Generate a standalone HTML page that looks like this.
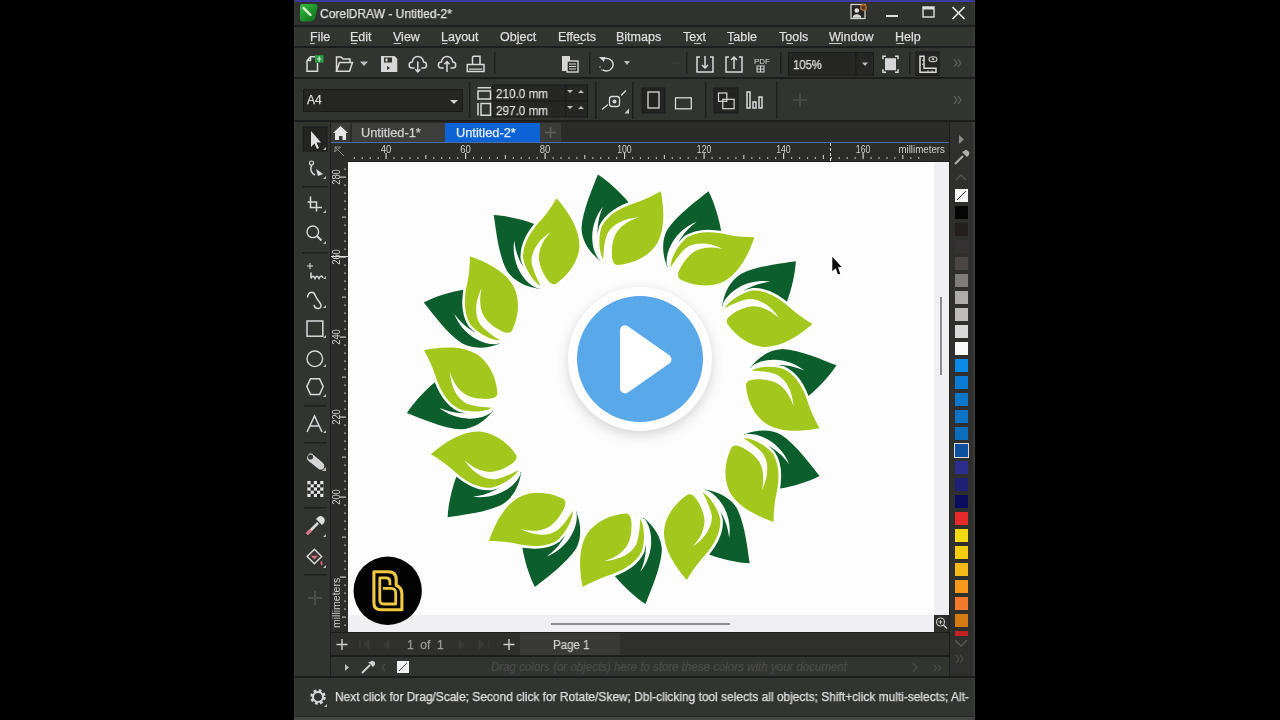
<!DOCTYPE html>
<html><head><meta charset="utf-8">
<style>
*{margin:0;padding:0;box-sizing:border-box}
html,body{width:1280px;height:720px;overflow:hidden;background:#000}
body{position:relative;font-family:"Liberation Sans",sans-serif;color:#d6d6d6}
.a{position:absolute}
.t{position:absolute;white-space:nowrap;font-size:12.5px;color:#dedede;line-height:14px;will-change:transform;-webkit-text-stroke:0.25px currentColor}
.ln{position:absolute;background:#1d1d1d}
svg{position:absolute;overflow:visible}
.sw{position:absolute;left:955px;width:13px;height:13px}
.ic{fill:none;stroke:#d9d9d9;stroke-width:1.5}
.icf{fill:#d9d9d9}
</style></head><body>
<!-- window background -->
<div class="a" style="left:294px;top:0;width:681px;height:720px;background:#323430;border-left:1px solid #3c3d3b;border-right:2px solid #3a3b39"></div>
<div class="a" style="left:294px;top:717px;width:680px;height:3px;background:#474845"></div>
<div class="a" style="left:294px;top:716px;width:680px;height:1px;background:#262725"></div>
<div class="a" style="left:295px;top:0;width:679px;height:2px;background:#3b3aa0"></div>
<div class="a" style="left:295px;top:2px;width:679px;height:24px;background:#30322f"></div>
<div class="ln" style="left:294px;top:25px;width:681px;height:2px"></div>
<!-- corel logo -->
<svg width="20" height="20" style="left:298.5px;top:3px"><defs><linearGradient id="lg" x1="0" y1="0" x2="1" y2="1"><stop offset="0" stop-color="#36c043"/><stop offset="1" stop-color="#086a18"/></linearGradient></defs><path d="M1 3.5 Q1 1 3.5 1 L16 1 Q19 1 18.5 4 L16 15.5 Q14.5 18.5 11 18.5 L3.5 18.5 Q1 18.5 1 16Z" fill="url(#lg)"/><path d="M4.5 5 L11.5 12" stroke="#e6f7d8" stroke-width="2.4" stroke-linecap="round"/></svg>
<div class="t" style="left:320px;top:7px;font-size:13px;color:#e4e4e4;transform:scaleX(0.925);transform-origin:0 0">CorelDRAW - Untitled-2*</div>
<!-- title right icons -->
<svg width="120" height="22" style="left:848px;top:2px">
<rect x="3" y="2.5" width="14" height="14" fill="#242422" stroke="#d0d0d0" stroke-width="1.3"/><circle cx="8.8" cy="8.5" r="2.3" fill="#e8dcd8"/><path d="M4.5 15.8 Q5 12.5 8.8 12.3 Q12.8 12.5 13.5 15.8Z" fill="#d8d8d8"/><circle cx="15.5" cy="5.5" r="2.8" fill="#5a3a1e" stroke="#b86a22" stroke-width="1.3"/>
<rect x="38" y="13" width="12" height="2" fill="#e0e0e0"/>
<rect x="75" y="5" width="11" height="10" fill="none" stroke="#e0e0e0" stroke-width="1.4"/><rect x="75" y="5" width="11" height="2.5" fill="#e0e0e0"/>
<path d="M104.5 5 L116.5 17 M116.5 5 L104.5 17" stroke="#e6e6e6" stroke-width="1.7"/>
</svg>
<!-- menu -->
<div class="ln" style="left:294px;top:46px;width:681px;height:2px"></div>
<div class="t" style="left:310px;top:30px">File</div>
<div class="t" style="left:350px;top:30px">Edit</div>
<div class="t" style="left:393px;top:30px">View</div>
<div class="t" style="left:441px;top:30px">Layout</div>
<div class="t" style="left:500px;top:30px">Object</div>
<div class="t" style="left:558px;top:30px">Effects</div>
<div class="t" style="left:616px;top:30px">Bitmaps</div>
<div class="t" style="left:683px;top:30px">Text</div>
<div class="t" style="left:727px;top:30px">Table</div>
<div class="t" style="left:779px;top:30px">Tools</div>
<div class="t" style="left:829px;top:30px">Window</div>
<div class="t" style="left:895px;top:30px">Help</div>
<svg width="1280" height="50" style="left:0;top:0"><rect x="310" y="43" width="4.8" height="1" fill="#c8c8c8"/><rect x="351" y="43" width="6.0" height="1" fill="#c8c8c8"/><rect x="393.5" y="43" width="7.5" height="1" fill="#c8c8c8"/><rect x="442" y="43" width="5.4" height="1" fill="#c8c8c8"/><rect x="519" y="43" width="3.5" height="1" fill="#c8c8c8"/><rect x="577.6" y="43" width="5.4" height="1" fill="#c8c8c8"/><rect x="617.4" y="43" width="5.6" height="1" fill="#c8c8c8"/><rect x="694" y="43" width="7.0" height="1" fill="#c8c8c8"/><rect x="728.5" y="43" width="5.5" height="1" fill="#c8c8c8"/><rect x="786.5" y="43" width="6.5" height="1" fill="#c8c8c8"/><rect x="829" y="43" width="13.0" height="1" fill="#c8c8c8"/><rect x="896.3" y="43" width="8.0" height="1" fill="#c8c8c8"/></svg>
<!-- toolbar -->
<div class="ln" style="left:294px;top:77px;width:681px;height:2px"></div>
<svg width="680" height="30" style="left:294px;top:48px">
 <!-- new -->
 <path class="ic" d="M13 12.5 L16.5 8.7 L21 8.7 M13 12.5 L13 23.3 L23.5 23.3 L23.5 15 M16.5 8.7 L16.5 12.5 L13 12.5" stroke-width="1.4"/>
 <rect x="21" y="7.2" width="8.5" height="7.5" fill="#2a9c48"/><path d="M25.2 8.2 V13.7 M23 11 H27.4" stroke="#cfeecf" stroke-width="1.1"/>
 <!-- open -->
 <path class="ic" d="M42.5 23.3 L42.5 9 L47 9 L49 11 L56 11 L56 14 M42.5 23.3 L45.5 14.5 L58.5 14.5 L55.5 23.3 Z" stroke-width="1.4"/>
 <path d="M66 13.5 L74 13.5 L70 18Z" fill="#bdbdbd"/>
 <!-- save -->
 <path d="M87 8 L100.5 8 L103.3 10.8 L103.3 24 L87 24Z" fill="#d6d6d6"/><rect x="90" y="9.5" width="8" height="5" fill="#323430"/><rect x="91.5" y="10.5" width="2" height="3" fill="#d6d6d6"/><path d="M93 18 L93 22 L96 20Z" fill="#323430"/>
 <!-- cloud down -->
 <path class="ic" d="M120.5 20 L118 20 Q115.2 20 115.2 17 Q115.2 14 118.2 14 Q119.2 8.5 123.8 8.5 Q128.6 8.5 129.6 14 Q132.5 14 132.5 17 Q132.5 20 129.8 20 L127.3 20" stroke-width="1.4"/><path class="ic" d="M123.8 13.5 V24 M121.3 21.3 L123.8 24 L126.3 21.3" stroke-width="1.4"/>
 <!-- cloud up -->
 <path class="ic" d="M149.7 20 L147.2 20 Q144.4 20 144.4 17 Q144.4 14 147.4 14 Q148.4 8.5 153 8.5 Q157.8 8.5 158.8 14 Q161.7 14 161.7 17 Q161.7 20 159 20 L156.5 20" stroke-width="1.4"/><path class="ic" d="M153 24 V13.5 M150.5 16.2 L153 13.5 L155.5 16.2" stroke-width="1.4"/>
 <!-- print -->
 <path class="ic" d="M178.5 16.6 L178.5 9.5 Q178.5 8.3 179.7 8.3 L186 8.3 L186 16.6 M173.3 16.6 L190 16.6 L190 23.6 L173.3 23.6 Z" stroke-width="1.4"/><rect x="175" y="20.5" width="13.3" height="1.2" fill="#d9d9d9"/>
 <rect x="200" y="4" width="1.5" height="22" fill="#1f1f1f"/>
 <!-- copy/paste -->
 <path d="M268 8 L276 8 L276 23 L268 23Z" fill="#d6d6d6"/><rect x="273" y="13" width="11" height="11" fill="#2f302e" stroke="#d6d6d6" stroke-width="1.4"/><path d="M275 16 H282 M275 18.5 H282 M275 21 H282" stroke="#d6d6d6" stroke-width="1"/>
 <rect x="295" y="4" width="1.5" height="22" fill="#1f1f1f"/>
 <!-- undo -->
 <path class="ic" d="M308 11 Q314 9 318 13 Q321 18 316 22 Q313 24 309 22"/><path d="M305 9 L311 9 L310 14Z" fill="#d9d9d9"/><circle cx="306" cy="19" r="1" fill="#888"/><circle cx="308" cy="22" r="1" fill="#888"/>
 <path d="M330 13 L336 13 L333 17Z" fill="#bdbdbd"/>
 <path d="M378 15 H386" stroke="#3e3f3d" stroke-width="1.5"/>
 <rect x="392" y="4" width="1.5" height="22" fill="#1f1f1f"/>
 <!-- import -->
 <path class="ic" d="M406 9 L403 9 L403 24 L419 24 L419 9 L416 9"/><path class="ic" d="M411 8 V20 M408 17 L411 20 L414 17"/>
 <!-- export -->
 <path class="ic" d="M435 9 L432 9 L432 24 L448 24 L448 9 L445 9"/><path class="ic" d="M440 21 V9 M437 12 L440 9 L443 12"/>
 <!-- pdf -->
 <text x="460" y="16" font-family="Liberation Sans" font-size="8" fill="#d6d6d6">PDF</text><rect x="463" y="18" width="7" height="6" fill="none" stroke="#d6d6d6" stroke-width="1"/><path d="M466.5 18 V24 M463 21 H470" stroke="#d6d6d6" stroke-width="1"/>
 <rect x="486" y="4" width="1.5" height="22" fill="#1f1f1f"/>
 <!-- zoom combo -->
 <rect x="494.5" y="4.6" width="85" height="22.5" fill="#262725" stroke="#1b1b1b"/>
 <rect x="561" y="4.6" width="1.5" height="22.5" fill="#1b1b1b"/>
 <path d="M568 14.5 L574 14.5 L571 18Z" fill="#bdbdbd"/>
 <!-- fit page -->
 <g transform="translate(0 1.2)"><path class="ic" d="M589 10 V7 H592 M601 7 H604 V10 M604 20 V23 H601 M592 23 H589 V20"/><rect x="591" y="9" width="11" height="12" fill="#d6d6d6"/></g>
 <rect x="615" y="4" width="1.5" height="22" fill="#1f1f1f"/>
 <!-- ruler view -->
 <rect x="622" y="4" width="23" height="23.5" fill="#252624" stroke="#1a1a1a"/>
 <g transform="translate(1 1.2)"><path class="ic" d="M625 7 V23 H641 V19 H629 V7 Z" stroke-width="1.3"/><path d="M629 11 H627 M629 15 H627 M633 23 V21 M637 23 V21" stroke="#d9d9d9" stroke-width="1"/>
 <ellipse cx="638" cy="10" rx="4" ry="2.5" fill="none" stroke="#d9d9d9" stroke-width="1.1"/><circle cx="638" cy="10" r="1.1" fill="#d9d9d9"/></g>
 <path d="M660 11 L663 15 L660 19 M664 11 L667 15 L664 19" stroke="#5a5a58" stroke-width="1.3" fill="none"/>
</svg>
<div class="t" style="left:793px;top:58px;font-size:12.5px;color:#e0e0e0;transform:scaleX(0.9);transform-origin:0 0">105%</div>
<!-- property bar -->
<div class="ln" style="left:294px;top:120px;width:681px;height:2px"></div>
<div class="a" style="left:303px;top:89px;width:160px;height:23px;background:#252624;border:1px solid #1a1a1a"></div>
<div class="t" style="left:307px;top:93px;font-size:12px">A4</div>
<svg width="680" height="42" style="left:294px;top:79px">
 <path d="M156 21 L164 21 L160 25Z" fill="#cfcfcf"/>
 <rect x="175" y="3" width="1.5" height="36" fill="#1f1f1f"/>
 <!-- w/h icons -->
 <path class="ic" d="M183.5 8.8 H197 M184 12 H196.5 V20 H184 Z" stroke-width="1.3"/>
 <path class="ic" d="M184 24 V36.5 M187 24.5 H196.5 V36.3 H187 Z" stroke-width="1.3"/>
 <rect x="198.5" y="6" width="95" height="32" fill="#262725" stroke="#1a1a1a"/>
 <rect x="271" y="6" width="1.2" height="32" fill="#1a1a1a"/><rect x="198.5" y="21.5" width="95" height="1.2" fill="#1a1a1a"/>
 <path d="M273 11 L279 11 L276 14Z M284 14 L290 14 L287 11Z M273 27 L279 27 L276 30Z M284 30 L290 30 L287 27Z" fill="#bdbdbd"/>
 <rect x="301" y="3" width="1.6" height="37" fill="#1f1f1f"/>
 <!-- transform icon -->
 <rect x="315.5" y="17.5" width="10" height="10" rx="2.5" fill="none" stroke="#d9d9d9" stroke-width="1.3"/><circle cx="320.5" cy="22.5" r="2" fill="#d9d9d9"/><path d="M308.5 30 L313.5 26 M327.5 16 L331.5 12" stroke="#d9d9d9" stroke-width="1.4" stroke-linecap="round"/><path d="M330.5 34.5 L335 34.5 L335 29.5Z" fill="#cfcfcf"/>
 <rect x="338" y="3" width="1.6" height="37" fill="#1f1f1f"/>
 <!-- portrait/landscape -->
 <rect x="348" y="9" width="23" height="25" fill="#232422" stroke="#1a1a1a"/>
 <rect x="354" y="13" width="11" height="16" fill="none" stroke="#d9d9d9" stroke-width="1.3"/>
 <rect x="381.5" y="18.8" width="15.8" height="11" fill="none" stroke="#d9d9d9" stroke-width="1.3"/>
 <rect x="411" y="3" width="1.5" height="36" fill="#1f1f1f"/>
 <rect x="420" y="9" width="24" height="25" fill="#232422" stroke="#1a1a1a"/>
 <rect x="424.5" y="14" width="8.3" height="8.3" fill="none" stroke="#d9d9d9" stroke-width="1.2"/><rect x="428.8" y="20.3" width="11.3" height="9.4" fill="none" stroke="#d9d9d9" stroke-width="1.2"/>
 <path class="ic" d="M453 13 H456 V29 H453Z M459 23 H462 V29 H459Z M465 18 H468 V29 H465Z" stroke-width="1.2"/>
 <rect x="482" y="3" width="1.5" height="36" fill="#1f1f1f"/>
 <path d="M506 14 V28 M499 21 H513" stroke="#4d4e4c" stroke-width="1.6"/>
 <path d="M660 17 L663 21 L660 25 M664 17 L667 21 L664 25" stroke="#5a5a58" stroke-width="1.3" fill="none"/>
</svg>
<div class="t" style="left:496px;top:87px;font-size:13px;color:#dcdcdc;transform:scaleX(0.9);transform-origin:0 0">210.0 mm</div>
<div class="t" style="left:496px;top:103.5px;font-size:13px;color:#dcdcdc;transform:scaleX(0.9);transform-origin:0 0">297.0 mm</div>

<!-- toolbox -->
<div class="ln" style="left:330px;top:122px;width:1px;height:555px"></div>
<svg width="36" height="500" style="left:294px;top:122px">
 <rect x="9" y="5" width="24" height="24" fill="#232422" stroke="#1a1a1a"/>
 <path d="M17 9 L17 25 L20.5 21.5 L23 27 L25 26 L22.5 20.5 L27 20.5 Z" fill="#e0e0e0"/><path d="M29 28 L32 25 L32 28Z" fill="#bbb"/>
 <!-- shape -->
 <circle cx="17.5" cy="41" r="2" fill="none" stroke="#d9d9d9" stroke-width="1.2"/><path class="ic" d="M17.5 43 Q15 50 21 53" stroke-width="1.2"/><path d="M22 47 L29 52 L24 54Z" fill="#e0e0e0"/><path d="M29 57 L32 54 L32 57Z" fill="#bbb"/>
 <rect x="8" y="64" width="26" height="1.5" fill="#1f1f1f"/>
 <!-- crop -->
 <path class="ic" d="M16.5 74.5 V85.5 H28 M13.5 80 H22.5 V89.5" stroke-width="1.7"/><path d="M29 91 L32 88 L32 91Z" fill="#bbb"/>
 <!-- zoom -->
 <circle cx="18.8" cy="109.8" r="5.8" fill="none" stroke="#d9d9d9" stroke-width="1.4"/><path d="M23 114 L27.5 118.5" stroke="#d9d9d9" stroke-width="1.9"/><path d="M29 122 L32 119 L32 122Z" fill="#bbb"/>
 <rect x="8" y="130" width="26" height="1.5" fill="#1f1f1f"/>
 <!-- freehand -->
 <path d="M16 141 V147 M13 144 H19" stroke="#d9d9d9" stroke-width="1.1"/><path class="ic" d="M17 150.5 V156.5 Q19 152 21 156.5 Q23 152 25 156.5 Q27 152 29 156" stroke-width="1.2"/><path d="M29 157 L32 154 L32 157Z" fill="#bbb"/>
 <!-- artistic -->
 <path class="ic" d="M13.5 175.5 C14 169.5 19.5 168.5 21.5 174 C23.5 179 27.5 181 27 184 C26.5 187.5 21 187.5 20 183" stroke-width="1.8"/><path d="M29 186 L32 183 L32 186Z" fill="#bbb"/>
 <!-- rect -->
 <rect x="13" y="199" width="15.8" height="15.2" fill="none" stroke="#d9d9d9" stroke-width="1.5"/><path d="M29 216 L32 213 L32 216Z" fill="#bbb"/>
 <!-- ellipse -->
 <circle cx="20.8" cy="236.8" r="7.8" fill="none" stroke="#d9d9d9" stroke-width="1.4"/><path d="M29 245 L32 242 L32 245Z" fill="#bbb"/>
 <!-- polygon -->
 <path class="ic" d="M16.5 256.8 H25.6 L29.2 264.6 L25.6 272.4 H16.5 L12.8 264.6Z" stroke-width="1.4"/><path d="M29 275 L32 272 L32 275Z" fill="#bbb"/>
 <rect x="10" y="283" width="22" height="1.5" fill="#1f1f1f"/>
 <!-- A -->
 <path class="ic" d="M13 310 L20.5 294 L28 310 M15.5 304 H25.5" stroke-width="1.6"/><path d="M29 311 L32 308 L32 311Z" fill="#bbb"/>
 <rect x="10" y="320" width="22" height="1.5" fill="#1f1f1f"/>
 <!-- blend -->
 <path d="M14.5 332.5 Q11.5 336 14.5 339 L24 346.5 Q27 349 29.5 346.5 Q31.5 343.5 28.5 340.5 L19.5 333 Q17 330 14.5 332.5Z" fill="#d6d6d6"/><circle cx="16.5" cy="335" r="2.6" fill="#3a3a3a"/><path d="M28 349 L32 345 L32 349Z" fill="#bbb"/>
 <!-- transparency -->
 <rect x="13.4" y="359" width="16" height="16" fill="#e6e6e6"/>
 <g fill="#262626"><rect x="13.4" y="362.2" width="3.2" height="3.2"/><rect x="13.4" y="368.6" width="3.2" height="3.2"/><rect x="16.6" y="359.0" width="3.2" height="3.2"/><rect x="16.6" y="365.4" width="3.2" height="3.2"/><rect x="16.6" y="371.8" width="3.2" height="3.2"/><rect x="19.8" y="362.2" width="3.2" height="3.2"/><rect x="19.8" y="368.6" width="3.2" height="3.2"/><rect x="23.0" y="359.0" width="3.2" height="3.2"/><rect x="23.0" y="365.4" width="3.2" height="3.2"/><rect x="23.0" y="371.8" width="3.2" height="3.2"/><rect x="26.2" y="362.2" width="3.2" height="3.2"/><rect x="26.2" y="368.6" width="3.2" height="3.2"/></g>
 <rect x="10" y="385" width="22" height="1.5" fill="#1f1f1f"/>
 <!-- eyedropper -->
 <path d="M13 412 L24 401" stroke="#d9d9d9" stroke-width="2.6"/><path d="M13 412 L17 408" stroke="#e07080" stroke-width="2.6"/><path d="M22 397 L28 403 L30 401 Q32 397 29 395 Q27 393 24 395Z" fill="#e0e0e0"/><path d="M29 415 L32 412 L32 415Z" fill="#bbb"/>
 <!-- fill -->
 <path class="ic" d="M13.2 434.5 L20.4 427.3 L27.6 434.5 L20.4 441.7Z" stroke-width="1.4"/><path d="M16.8 433.8 L24 433.8 L20.4 437.4Z" fill="#e06a80"/><path d="M27.3 438.5 Q29.5 441.5 27.8 443.5 Q25.5 442 27.3 438.5Z" fill="#e06a80"/><path d="M29 446 L32 443 L32 446Z" fill="#bbb"/>
 <rect x="10" y="452" width="22" height="1.5" fill="#1f1f1f"/>
 <path d="M21 469 V483 M14 476 H28" stroke="#4e4f4d" stroke-width="1.8"/>
</svg>

<!-- tab bar -->
<div class="a" style="left:331px;top:122px;width:618px;height:21px;background:#2b2c2a"></div>
<div class="a" style="left:331px;top:123px;width:19px;height:19px;background:#3a3b39"></div>
<svg width="20" height="20" style="left:331px;top:123px"><path d="M9.5 3 L17 10 L15 10 L15 17 L11.5 17 L11.5 13 L8 13 L8 17 L4 17 L4 10 L2 10Z" fill="#e6e6e6"/></svg>
<div class="a" style="left:352px;top:123px;width:93px;height:19px;background:#3d3e3c"></div>
<div class="a" style="left:445px;top:123px;width:95px;height:19px;background:#0b63d6"></div>
<div class="a" style="left:540px;top:123px;width:21px;height:19px;background:#3a3b39"></div>
<svg width="21" height="19" style="left:540px;top:123px"><path d="M10.5 4 V15 M5 9.5 H16" stroke="#606160" stroke-width="1.6"/></svg>
<div class="t" style="left:361px;top:126px;font-size:12.8px;color:#cfcfcf">Untitled-1*</div>
<div class="t" style="left:456px;top:126px;font-size:12.8px;color:#e8eefc">Untitled-2*</div>
<div class="a" style="left:331px;top:142px;width:618px;height:1px;background:#4d6fa5"></div>

<!-- rulers -->
<div class="a" style="left:331px;top:143px;width:618px;height:18px;background:#2c2d2b"></div>
<div class="a" style="left:331px;top:143px;width:17px;height:489px;background:#2c2d2b"></div>
<svg width="17" height="18" style="left:331px;top:143px"><path d="M4 4 L13 13 M4 4 L4 9 M4 4 L9 4 M3 9 L10 4" stroke="#8a8a8a" stroke-width="1"/></svg>

<!-- canvas -->
<div class="a" style="left:348px;top:161px;width:601px;height:471px;background:#f0eff2"></div>
<div class="a" style="left:348px;top:161px;width:601px;height:1px;background:#1f1f1f"></div>
<div class="a" style="left:348px;top:162px;width:586px;height:453px;background:#fdfdfe"></div>
<div class="a" style="left:934px;top:615px;width:15px;height:17px;background:#2c2d2b"></div>
<svg width="15" height="17" style="left:934px;top:615px"><circle cx="6.5" cy="7" r="4" fill="none" stroke="#cfcfcf" stroke-width="1.1"/><path d="M9.5 10 L13 13.5" stroke="#cfcfcf" stroke-width="1.4"/><path d="M6.5 5 V9 M4.5 7 H8.5" stroke="#cfcfcf" stroke-width="0.9"/></svg>
<div class="a" style="left:940px;top:297px;width:2px;height:78px;background:#8d8c8e"></div>
<div class="a" style="left:551px;top:623px;width:179px;height:2px;background:#8d8c8e"></div>
<svg width="1280" height="720" style="left:0;top:0" viewBox="0 0 1280 720"><defs><g id="pr" transform="translate(0.5 0.4)"><path d="M597.4 174 C607 180 620 192 628.1 201.9 L610 214 L602 240 L599.6 260.3 C588 251 581.5 240 581 228 C582 210 592 188 597.4 174Z" fill="#0c5e2c"/><path d="M602.5 206.3 C596 214 591.5 226 591.7 237 C591.8 247 594.5 254 598.6 259.3 L602.5 258.8 C599 250 597 240 597 230 C597.2 221 599.5 213 602.5 206.3Z" fill="#fff"/><path d="M660.3 190.9 C664 210 664.5 230 656 244 C648 256 633 263.5 617 264.5 C613.5 264.2 611.8 261 611.5 256 C611 250 611.5 240 615.5 233 C620.5 225 628.5 220 638.5 216.9 C623.5 218 611.5 224 606.5 234 C603.5 242 603 252 602.7 259.1 C598.5 252 597.5 238 601 226.6 C607 214 622 206 636 202 C645 199 653 195 660.3 190.9Z" fill="#a4c71e" stroke="#fff" stroke-width="5" stroke-linejoin="round" paint-order="stroke"/></g></defs><use href="#pr"/><use href="#pr" transform="rotate(30 621.7 389.16)"/><use href="#pr" transform="rotate(60 621.7 389.16)"/><use href="#pr" transform="rotate(90 621.7 389.16)"/><use href="#pr" transform="rotate(120 621.7 389.16)"/><use href="#pr" transform="rotate(150 621.7 389.16)"/><use href="#pr" transform="rotate(180 621.7 389.16)"/><use href="#pr" transform="rotate(210 621.7 389.16)"/><use href="#pr" transform="rotate(240 621.7 389.16)"/><use href="#pr" transform="rotate(270 621.7 389.16)"/><use href="#pr" transform="rotate(300 621.7 389.16)"/><use href="#pr" transform="rotate(330 621.7 389.16)"/></svg>
<!-- play button -->
<div class="a" style="left:568px;top:287px;width:144px;height:144px;border-radius:50%;background:#fefefe;box-shadow:0 4px 13px rgba(0,0,0,0.17)"></div>
<div class="a" style="left:577px;top:296px;width:126px;height:126px;border-radius:50%;background:#58a8ea"></div>
<svg width="1280" height="720" style="left:0;top:0"><path d="M625 330.3 L666.5 359.3 L625 388.3Z" fill="#fff" stroke="#fff" stroke-width="10" stroke-linejoin="round"/></svg>
<!-- logo -->
<svg width="80" height="80" style="left:348px;top:551px">
 <circle cx="39.7" cy="39.75" r="34.2" fill="#030303"/>
 <path d="M25.9 20.7 H40.4 Q48.2 20.7 48.2 28.5 V34.3 Q53.9 36.5 53.9 43.6 V58.8 H33 Q25.9 58.8 25.9 51.7 Z" fill="none" stroke="#f0c942" stroke-width="3.1" stroke-linejoin="round"/>
 <path d="M41.9 34.3 V30.9 Q41.9 26.9 37.9 26.9 H31.8 V49 Q31.8 53 35.8 53 H47.7 V42 Q47.7 37.3 43 37.3 H34.9" fill="none" stroke="#f0c942" stroke-width="2.8" stroke-linejoin="round"/>
</svg>
<!-- cursor -->
<svg width="20" height="24" style="left:830px;top:254px"><path d="M2.3 2.7 L2.3 17.3 L5.8 14.2 L7.9 20.6 L10.2 19.8 L8.1 13.3 L11.7 13Z" fill="#080808"/></svg>

<svg width="1280" height="720" style="left:0;top:0"><g><rect x="353.7" y="157" width="1.2" height="2" fill="#a8a8a8"/><rect x="361.6" y="157" width="1.2" height="2" fill="#a8a8a8"/><rect x="369.6" y="157" width="1.2" height="2" fill="#a8a8a8"/><rect x="377.6" y="157" width="1.2" height="2" fill="#a8a8a8"/><rect x="385.5" y="153" width="1.2" height="6" fill="#cfcfcf"/><rect x="393.4" y="157" width="1.2" height="2" fill="#a8a8a8"/><rect x="401.4" y="157" width="1.2" height="2" fill="#a8a8a8"/><rect x="409.4" y="157" width="1.2" height="2" fill="#a8a8a8"/><rect x="417.3" y="157" width="1.2" height="2" fill="#a8a8a8"/><rect x="425.2" y="155" width="1.2" height="4" fill="#bdbdbd"/><rect x="433.2" y="157" width="1.2" height="2" fill="#a8a8a8"/><rect x="441.1" y="157" width="1.2" height="2" fill="#a8a8a8"/><rect x="449.1" y="157" width="1.2" height="2" fill="#a8a8a8"/><rect x="457.1" y="157" width="1.2" height="2" fill="#a8a8a8"/><rect x="465.0" y="153" width="1.2" height="6" fill="#cfcfcf"/><rect x="472.9" y="157" width="1.2" height="2" fill="#a8a8a8"/><rect x="480.9" y="157" width="1.2" height="2" fill="#a8a8a8"/><rect x="488.9" y="157" width="1.2" height="2" fill="#a8a8a8"/><rect x="496.8" y="157" width="1.2" height="2" fill="#a8a8a8"/><rect x="504.8" y="155" width="1.2" height="4" fill="#bdbdbd"/><rect x="512.7" y="157" width="1.2" height="2" fill="#a8a8a8"/><rect x="520.6" y="157" width="1.2" height="2" fill="#a8a8a8"/><rect x="528.6" y="157" width="1.2" height="2" fill="#a8a8a8"/><rect x="536.5" y="157" width="1.2" height="2" fill="#a8a8a8"/><rect x="544.5" y="153" width="1.2" height="6" fill="#cfcfcf"/><rect x="552.5" y="157" width="1.2" height="2" fill="#a8a8a8"/><rect x="560.4" y="157" width="1.2" height="2" fill="#a8a8a8"/><rect x="568.4" y="157" width="1.2" height="2" fill="#a8a8a8"/><rect x="576.3" y="157" width="1.2" height="2" fill="#a8a8a8"/><rect x="584.2" y="155" width="1.2" height="4" fill="#bdbdbd"/><rect x="592.2" y="157" width="1.2" height="2" fill="#a8a8a8"/><rect x="600.1" y="157" width="1.2" height="2" fill="#a8a8a8"/><rect x="608.1" y="157" width="1.2" height="2" fill="#a8a8a8"/><rect x="616.0" y="157" width="1.2" height="2" fill="#a8a8a8"/><rect x="624.0" y="153" width="1.2" height="6" fill="#cfcfcf"/><rect x="632.0" y="157" width="1.2" height="2" fill="#a8a8a8"/><rect x="639.9" y="157" width="1.2" height="2" fill="#a8a8a8"/><rect x="647.9" y="157" width="1.2" height="2" fill="#a8a8a8"/><rect x="655.8" y="157" width="1.2" height="2" fill="#a8a8a8"/><rect x="663.8" y="155" width="1.2" height="4" fill="#bdbdbd"/><rect x="671.7" y="157" width="1.2" height="2" fill="#a8a8a8"/><rect x="679.6" y="157" width="1.2" height="2" fill="#a8a8a8"/><rect x="687.6" y="157" width="1.2" height="2" fill="#a8a8a8"/><rect x="695.5" y="157" width="1.2" height="2" fill="#a8a8a8"/><rect x="703.5" y="153" width="1.2" height="6" fill="#cfcfcf"/><rect x="711.5" y="157" width="1.2" height="2" fill="#a8a8a8"/><rect x="719.4" y="157" width="1.2" height="2" fill="#a8a8a8"/><rect x="727.4" y="157" width="1.2" height="2" fill="#a8a8a8"/><rect x="735.3" y="157" width="1.2" height="2" fill="#a8a8a8"/><rect x="743.2" y="155" width="1.2" height="4" fill="#bdbdbd"/><rect x="751.2" y="157" width="1.2" height="2" fill="#a8a8a8"/><rect x="759.1" y="157" width="1.2" height="2" fill="#a8a8a8"/><rect x="767.1" y="157" width="1.2" height="2" fill="#a8a8a8"/><rect x="775.0" y="157" width="1.2" height="2" fill="#a8a8a8"/><rect x="783.0" y="153" width="1.2" height="6" fill="#cfcfcf"/><rect x="791.0" y="157" width="1.2" height="2" fill="#a8a8a8"/><rect x="798.9" y="157" width="1.2" height="2" fill="#a8a8a8"/><rect x="806.9" y="157" width="1.2" height="2" fill="#a8a8a8"/><rect x="814.8" y="157" width="1.2" height="2" fill="#a8a8a8"/><rect x="822.8" y="155" width="1.2" height="4" fill="#bdbdbd"/><rect x="830.7" y="157" width="1.2" height="2" fill="#a8a8a8"/><rect x="838.6" y="157" width="1.2" height="2" fill="#a8a8a8"/><rect x="846.6" y="157" width="1.2" height="2" fill="#a8a8a8"/><rect x="854.5" y="157" width="1.2" height="2" fill="#a8a8a8"/><rect x="862.5" y="153" width="1.2" height="6" fill="#cfcfcf"/><rect x="870.5" y="157" width="1.2" height="2" fill="#a8a8a8"/><rect x="878.4" y="157" width="1.2" height="2" fill="#a8a8a8"/><rect x="886.4" y="157" width="1.2" height="2" fill="#a8a8a8"/><rect x="894.3" y="157" width="1.2" height="2" fill="#a8a8a8"/><rect x="902.2" y="155" width="1.2" height="4" fill="#bdbdbd"/><rect x="910.2" y="157" width="1.2" height="2" fill="#a8a8a8"/><rect x="918.1" y="157" width="1.2" height="2" fill="#a8a8a8"/></g><g font-family="Liberation Sans" font-size="10.5" fill="#d0d0d0"><text x="380.7" y="152.8" textLength="10.6" lengthAdjust="spacingAndGlyphs">40</text><text x="460.2" y="152.8" textLength="10.6" lengthAdjust="spacingAndGlyphs">60</text><text x="539.7" y="152.8" textLength="10.6" lengthAdjust="spacingAndGlyphs">80</text><text x="617.2" y="152.8" textLength="14.5" lengthAdjust="spacingAndGlyphs">100</text><text x="696.8" y="152.8" textLength="14.5" lengthAdjust="spacingAndGlyphs">120</text><text x="776.2" y="152.8" textLength="14.5" lengthAdjust="spacingAndGlyphs">140</text><text x="855.8" y="152.8" textLength="14.5" lengthAdjust="spacingAndGlyphs">160</text><text x="898.4" y="153" textLength="46.6" lengthAdjust="spacingAndGlyphs">millimeters</text></g><g><rect x="344" y="168.5" width="2" height="1.2" fill="#a8a8a8"/><rect x="340" y="176.5" width="6" height="1.2" fill="#cfcfcf"/><rect x="344" y="184.5" width="2" height="1.2" fill="#a8a8a8"/><rect x="344" y="192.5" width="2" height="1.2" fill="#a8a8a8"/><rect x="344" y="200.5" width="2" height="1.2" fill="#a8a8a8"/><rect x="344" y="208.5" width="2" height="1.2" fill="#a8a8a8"/><rect x="342" y="216.5" width="4" height="1.2" fill="#bdbdbd"/><rect x="344" y="224.5" width="2" height="1.2" fill="#a8a8a8"/><rect x="344" y="232.5" width="2" height="1.2" fill="#a8a8a8"/><rect x="344" y="240.5" width="2" height="1.2" fill="#a8a8a8"/><rect x="344" y="248.5" width="2" height="1.2" fill="#a8a8a8"/><rect x="340" y="256.5" width="6" height="1.2" fill="#cfcfcf"/><rect x="344" y="264.5" width="2" height="1.2" fill="#a8a8a8"/><rect x="344" y="272.5" width="2" height="1.2" fill="#a8a8a8"/><rect x="344" y="280.5" width="2" height="1.2" fill="#a8a8a8"/><rect x="344" y="288.5" width="2" height="1.2" fill="#a8a8a8"/><rect x="342" y="296.5" width="4" height="1.2" fill="#bdbdbd"/><rect x="344" y="304.5" width="2" height="1.2" fill="#a8a8a8"/><rect x="344" y="312.5" width="2" height="1.2" fill="#a8a8a8"/><rect x="344" y="320.5" width="2" height="1.2" fill="#a8a8a8"/><rect x="344" y="328.5" width="2" height="1.2" fill="#a8a8a8"/><rect x="340" y="336.5" width="6" height="1.2" fill="#cfcfcf"/><rect x="344" y="344.5" width="2" height="1.2" fill="#a8a8a8"/><rect x="344" y="352.5" width="2" height="1.2" fill="#a8a8a8"/><rect x="344" y="360.5" width="2" height="1.2" fill="#a8a8a8"/><rect x="344" y="368.5" width="2" height="1.2" fill="#a8a8a8"/><rect x="342" y="376.5" width="4" height="1.2" fill="#bdbdbd"/><rect x="344" y="384.5" width="2" height="1.2" fill="#a8a8a8"/><rect x="344" y="392.5" width="2" height="1.2" fill="#a8a8a8"/><rect x="344" y="400.5" width="2" height="1.2" fill="#a8a8a8"/><rect x="344" y="408.5" width="2" height="1.2" fill="#a8a8a8"/><rect x="340" y="416.5" width="6" height="1.2" fill="#cfcfcf"/><rect x="344" y="424.5" width="2" height="1.2" fill="#a8a8a8"/><rect x="344" y="432.5" width="2" height="1.2" fill="#a8a8a8"/><rect x="344" y="440.5" width="2" height="1.2" fill="#a8a8a8"/><rect x="344" y="448.5" width="2" height="1.2" fill="#a8a8a8"/><rect x="342" y="456.5" width="4" height="1.2" fill="#bdbdbd"/><rect x="344" y="464.5" width="2" height="1.2" fill="#a8a8a8"/><rect x="344" y="472.5" width="2" height="1.2" fill="#a8a8a8"/><rect x="344" y="480.5" width="2" height="1.2" fill="#a8a8a8"/><rect x="344" y="488.5" width="2" height="1.2" fill="#a8a8a8"/><rect x="340" y="496.5" width="6" height="1.2" fill="#cfcfcf"/><rect x="344" y="504.5" width="2" height="1.2" fill="#a8a8a8"/><rect x="344" y="512.5" width="2" height="1.2" fill="#a8a8a8"/><rect x="344" y="520.5" width="2" height="1.2" fill="#a8a8a8"/><rect x="344" y="528.5" width="2" height="1.2" fill="#a8a8a8"/><rect x="342" y="536.5" width="4" height="1.2" fill="#bdbdbd"/><rect x="344" y="544.5" width="2" height="1.2" fill="#a8a8a8"/><rect x="344" y="552.5" width="2" height="1.2" fill="#a8a8a8"/><rect x="344" y="560.5" width="2" height="1.2" fill="#a8a8a8"/><rect x="344" y="568.5" width="2" height="1.2" fill="#a8a8a8"/><rect x="340" y="576.5" width="6" height="1.2" fill="#cfcfcf"/><rect x="344" y="584.5" width="2" height="1.2" fill="#a8a8a8"/><rect x="344" y="592.5" width="2" height="1.2" fill="#a8a8a8"/><rect x="344" y="600.5" width="2" height="1.2" fill="#a8a8a8"/><rect x="344" y="608.5" width="2" height="1.2" fill="#a8a8a8"/><rect x="342" y="616.5" width="4" height="1.2" fill="#bdbdbd"/><rect x="344" y="624.5" width="2" height="1.2" fill="#a8a8a8"/></g><g font-family="Liberation Sans" font-size="10.5" fill="#d0d0d0"><text transform="translate(339.5 177.0) rotate(-90)" x="-7.8" textLength="15.6" lengthAdjust="spacingAndGlyphs">280</text><text transform="translate(339.5 257.0) rotate(-90)" x="-7.8" textLength="15.6" lengthAdjust="spacingAndGlyphs">260</text><text transform="translate(339.5 337.0) rotate(-90)" x="-7.8" textLength="15.6" lengthAdjust="spacingAndGlyphs">240</text><text transform="translate(339.5 417.0) rotate(-90)" x="-7.8" textLength="15.6" lengthAdjust="spacingAndGlyphs">220</text><text transform="translate(339.5 497.0) rotate(-90)" x="-7.8" textLength="15.6" lengthAdjust="spacingAndGlyphs">200</text><text transform="translate(339.5 628) rotate(-90)" text-anchor="start">millimeters</text></g></svg>
<div class="a" style="left:830px;top:143px;width:1.2px;height:19px;background:repeating-linear-gradient(#e6e6e6 0 3px, transparent 3px 5px)"></div>
<div class="a" style="left:331px;top:256px;width:18px;height:1.2px;background:#dcdcdc"></div>

<!-- palette -->
<div class="a" style="left:950px;top:122px;width:23px;height:555px;background:#2f302e"></div>
<div class="ln" style="left:949px;top:122px;width:1px;height:555px"></div>
<svg width="24" height="60" style="left:950px;top:122px"><path d="M9 13 L14 17.5 L9 22Z" fill="#8a8a8a"/><path d="M5 42 L13 34" stroke="#b0b0b0" stroke-width="2"/><path d="M12 30 L17 35 L19 33 Q20 30 18 29 Q16 27 14 29Z" fill="#b0b0b0"/><path d="M6 58 L11 53 L16 58" stroke="#555" stroke-width="1.3" fill="none"/></svg>
<div class="sw" style="top:189px;background:#f6f6f6"><svg width="13" height="13" style="left:0;top:0"><line x1="2" y1="11" x2="11" y2="2" stroke="#333" stroke-width="1"/></svg></div><div class="sw" style="top:206px;background:#050505"></div><div class="sw" style="top:223px;background:#231f1f"></div><div class="sw" style="top:240px;background:#343232"></div><div class="sw" style="top:257px;background:#4a4646"></div><div class="sw" style="top:274px;background:#7f7d7b"></div><div class="sw" style="top:291px;background:#aeadab"></div><div class="sw" style="top:308px;background:#bfbebc"></div><div class="sw" style="top:325px;background:#d9d9d9"></div><div class="sw" style="top:342px;background:#fbfbfb"></div><div class="sw" style="top:359px;background:#0a8be8"></div><div class="sw" style="top:376px;background:#0a7cd8"></div><div class="sw" style="top:393px;background:#0b78cc"></div><div class="sw" style="top:410px;background:#0b74c6"></div><div class="sw" style="top:427px;background:#0a6ebe"></div><div class="sw" style="top:444px;background:#0c4f9e;outline:1.5px solid #d8d8d8"></div><div class="sw" style="top:461px;background:#2b2e8f"></div><div class="sw" style="top:478px;background:#1d2074"></div><div class="sw" style="top:495px;background:#0a0c5e"></div><div class="sw" style="top:512px;background:#e6292a"></div><div class="sw" style="top:529px;background:#f4da12"></div><div class="sw" style="top:546px;background:#f6cf12"></div><div class="sw" style="top:563px;background:#f6b91a"></div><div class="sw" style="top:580px;background:#f79a1b"></div><div class="sw" style="top:597px;background:#f5792a"></div><div class="sw" style="top:614px;background:#d67b12"></div><div class="sw" style="top:631px;height:5px;background:#c42222"></div>
<svg width="24" height="40" style="left:950px;top:636px"><path d="M5 4 L11 10 L17 4" stroke="#5a5a58" stroke-width="1.4" fill="none"/><path d="M6 19 L9 23 L6 27 M10 19 L13 23 L10 27" stroke="#4a4a48" stroke-width="1.3" fill="none" transform="rotate(-0 11 23)"/></svg>

<!-- page nav -->
<div class="a" style="left:331px;top:632px;width:618px;height:24px;background:#2f302e"></div>
<div class="ln" style="left:331px;top:632px;width:618px;height:1px"></div>
<div class="ln" style="left:331px;top:655px;width:618px;height:2px"></div>
<div class="a" style="left:520px;top:633px;width:100px;height:22px;background:#393a38"></div>
<svg width="200" height="24" style="left:331px;top:632px"><path d="M11 7 V18 M5.5 12.5 H16.5" stroke="#d0d0d0" stroke-width="1.4"/><path d="M29 8 V17 M38 8 L33 12.5 L38 17Z M58 8 L53 12.5 L58 17Z" fill="#3b3c3a" stroke="#3b3c3a" stroke-width="1"/><path d="M128 8 L133 12.5 L128 17Z M148 8 L153 12.5 L148 17Z M158 8 V17" fill="#3b3c3a" stroke="#3b3c3a" stroke-width="1"/><path d="M178 7 V18 M172.5 12.5 H183.5" stroke="#d0d0d0" stroke-width="1.4"/></svg>
<div class="t" style="left:553px;top:638px;font-size:12px;color:#d0d0d0;transform:scaleX(0.96);transform-origin:0 0">Page 1</div>
<div class="t" style="left:407px;top:638px;font-size:12px;color:#9a9a9a">1&nbsp; of&nbsp; 1</div>
<!-- color doc bar -->
<div class="ln" style="left:294px;top:676px;width:681px;height:2px"></div>
<svg width="100" height="20" style="left:331px;top:657px"><path d="M14 7 L18 10.5 L14 14Z" fill="#bdbdbd"/><path d="M31 16 L39 8" stroke="#cfcfcf" stroke-width="2"/><path d="M37 5 L42 10 L43.5 8.5 Q45 6 43 4.5 Q41 3 39 5Z" fill="#cfcfcf"/><path d="M54 7 L51 10.5 L54 14" stroke="#4a4a48" stroke-width="1.2" fill="none"/><rect x="66" y="4" width="12" height="12" fill="#f3f3f3"/><path d="M68 14 L76 6" stroke="#444" stroke-width="1"/></svg>
<div class="t" style="left:491px;top:660px;font-size:12px;color:#4c4d4a;font-style:italic;transform:scaleX(0.96);transform-origin:0 0">Drag colors (or objects) here to store these colors with your document</div>
<svg width="60" height="20" style="left:900px;top:657px"><path d="M13 6 L17 10.5 L13 15" stroke="#4a4a48" stroke-width="1.4" fill="none"/><path d="M34 8 L37 11 L34 14 M38 8 L41 11 L38 14" stroke="#4a4a48" stroke-width="1.2" fill="none"/></svg>
<!-- status -->
<svg width="24" height="24" style="left:306px;top:685px"><g transform="translate(12 12)"><circle r="6" fill="none" stroke="#d6d6d6" stroke-width="3.5" stroke-dasharray="2.6 2.1"/><circle r="5" fill="none" stroke="#d6d6d6" stroke-width="2"/></g><path d="M18 22 L21 19 L21 22Z" fill="#bbb"/></svg>
<div class="t" style="left:335px;top:690px;font-size:12.5px;color:#e0e0e0;transform:scaleX(0.955);transform-origin:0 0">Next click for Drag/Scale; Second click for Rotate/Skew; Dbl-clicking tool selects all objects; Shift+click multi-selects; Alt-</div>
</body></html>
